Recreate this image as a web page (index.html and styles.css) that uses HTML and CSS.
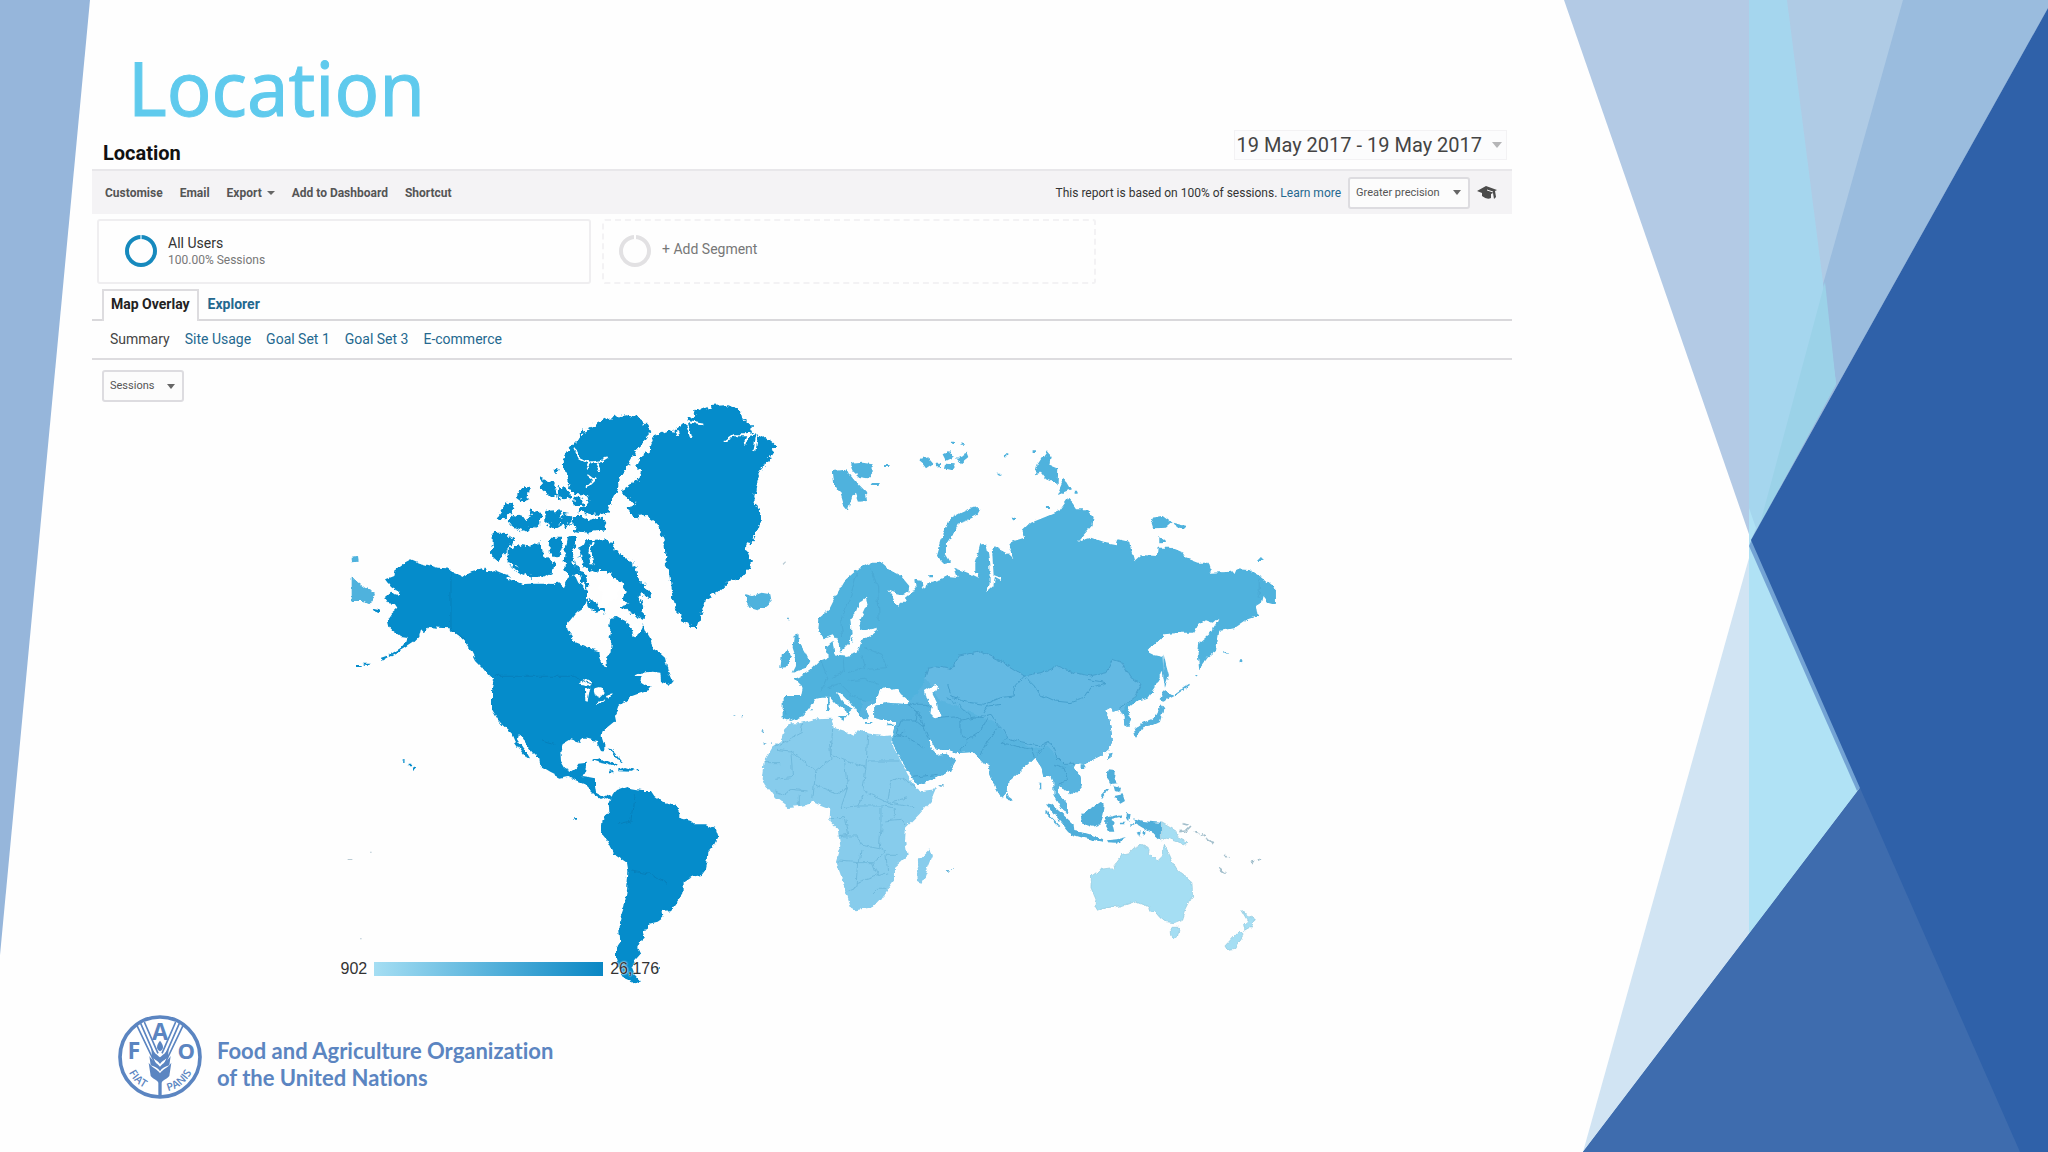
FILE: index.html
```html
<!DOCTYPE html>
<html lang="en">
<head>
<meta charset="utf-8">
<meta name="viewport" content="width=device-width, initial-scale=1">
<title>Location</title>
<link rel="stylesheet" href="styles.css">
</head>
<body>
<svg class="backdrop" viewBox="0 0 2048 1152" preserveAspectRatio="none" aria-hidden="true">
  <path fill="#96b6db" d="M0 0H90L0 955Z"/>
  <path fill="#b3cae5" d="M1564 0H2048V8L1751 540Z"/>
  <path fill="#afcbe5" d="M1787 0H2048V8L1836 384Z"/>
  <path fill="#9abcde" d="M1903 0H2048V8L1751 540Z"/>
  <path fill="#d1e4f3" d="M1749 558V934L1583 1152Z"/>
  <path fill="#a5d6ee" d="M1749 0H1787L1836 384L1751 540L1749 508Z"/>
  <path fill="#9bd2e8" d="M1825 282L1836 384L1760 524Z"/>
  <path fill="#b0e2f5" d="M1749 508L1756 528L1751 540L1860 788L1749 934Z"/>
  <path fill="#73a3d4" d="M1749 546L1752 539L1861 787L1857 791Z"/>
  <path fill="#2f61a9" d="M2048 8V1152H1583L1860 788L1751 540Z"/>
  <path fill="#3e6cae" d="M1860 788L2020 1152H1583Z"/>
</svg>

<main class="slide">
  <h1 class="slide-title">Location</h1>

  <section class="report">
    <header class="report-head">
      <h2>Location</h2>
      <button class="date-range" type="button">19 May 2017 - 19 May 2017 <span class="caret pale"></span></button>
    </header>

    <div class="toolbar">
      <div class="actions">
        <button type="button">Customise</button>
        <button type="button">Email</button>
        <button type="button">Export <span class="caret small"></span></button>
        <button type="button">Add to Dashboard</button>
        <button type="button">Shortcut</button>
      </div>
      <p class="sampling">This report is based on 100% of sessions. <a href="#learn">Learn more</a></p>
      <span class="picker precision">
        <select aria-label="Sampling precision"><option>Greater precision</option></select>
        <span class="caret"></span>
      </span>
      <svg class="cap" viewBox="0 0 20 16" aria-hidden="true">
        <path fill="#4b4b4b" d="M9 1L20 5L18 6L19 12L17 14L16 8L14 9V13Q10 15 5 11V8L0 6Z"/>
        <path fill="none" stroke="#f4f3f4" d="M10 5L16 7"/>
      </svg>
    </div>

    <div class="segments">
      <div class="segment">
        <svg class="ring" viewBox="0 0 32 32" aria-hidden="true"><circle cx="16" cy="16" r="14" fill="none" stroke="#1689bd" stroke-width="4"/><path stroke="#8fcbe6" stroke-width="2" d="M16 0V4"/></svg>
        <div><strong>All Users</strong><small>100.00% Sessions</small></div>
      </div>
      <button class="segment add" type="button">
        <svg class="ring" viewBox="0 0 32 32" aria-hidden="true"><circle cx="16" cy="16" r="14" fill="none" stroke="#e2e1e3" stroke-width="4"/><path stroke="#fff" stroke-width="2" d="M16 0V4"/></svg>
        <span>+ Add Segment</span>
      </button>
    </div>

    <nav class="tabs" aria-label="Report view">
      <a class="current" href="#map">Map Overlay</a>
      <a href="#explorer">Explorer</a>
    </nav>
    <nav class="subtabs" aria-label="Metric group">
      <a class="current" href="#summary">Summary</a>
      <a href="#usage">Site Usage</a>
      <a href="#goal1">Goal Set 1</a>
      <a href="#goal3">Goal Set 3</a>
      <a href="#ecommerce">E-commerce</a>
    </nav>

    <span class="picker metric">
      <select aria-label="Metric"><option>Sessions</option></select>
      <span class="caret"></span>
    </span>

    <div class="map" id="map">
      <svg viewBox="0 36 2880 1794" role="img" aria-label="World map of sessions by continent">
        <defs>
          <filter id="coast" x="-2%" y="-2%" width="104%" height="104%" color-interpolation-filters="sRGB">
            <feTurbulence type="fractalNoise" baseFrequency=".045" numOctaves="3" seed="4"/>
            <feDisplacementMap in="SourceGraphic" scale="16" xChannelSelector="R" yChannelSelector="G"/>
          </filter>
          <filter id="fjords" x="-2%" y="-2%" width="104%" height="104%" color-interpolation-filters="sRGB">
            <feTurbulence type="fractalNoise" baseFrequency=".06" numOctaves="3" seed="9"/>
            <feDisplacementMap in="SourceGraphic" scale="26" xChannelSelector="R" yChannelSelector="G"/>
          </filter>
          <path id="eurasia" d="M210 425L240 425 262 445 300 465 325 495 322 512 300 520 280 515 262 508 275 525 280 545 295 555 300 545 318 545 312 530 330 515 345 510 340 475 362 480 365 495 360 505 385 485 420 475 440 465 470 468 460 440 500 455 530 470 532 460 520 455 520 430 530 400 538 370 555 368 562 400 565 430 566 470 566 490 555 515 577 495 582 470 600 480 600 470 578 462 574 400 580 375 600 385 620 395 640 415 622 365 670 350 665 330 690 305 740 285 775 270 800 235 815 250 825 265 860 265 875 285 872 315 850 340 830 362 870 350 905 362 945 370 950 355 985 362 990 385 1000 420 1020 402 1068 405 1070 380 1110 380 1145 395 1155 412 1190 425 1220 425 1230 455 1290 452 1298 462 1305 445 1345 447 1385 470 1425 505 1425 552 1400 545 1385 525 1380 545 1365 555 1370 585 1340 595 1300 622 1255 630 1250 660 1245 690 1220 710 1195 745 1190 700 1195 665 1225 640 1250 600 1252 590 1235 605 1215 598 1190 615 1180 635 1140 635 1090 640 1065 665 1040 690 1060 700 1085 705 1087 745 1078 770 1060 800 1040 830 1010 840 985 862 980 875 992 900 985 918 970 910 968 885 958 866 935 872 932 858 910 870 922 885 925 900 930 925 935 955 922 985 900 1005 870 1020 845 1028 825 1025 818 1040 835 1065 842 1095 825 1115 810 1123 805 1110 785 1100 772 1090 768 1115 785 1135 798 1155 802 1180 785 1170 772 1145 758 1122 758 1085 750 1065 728 1068 722 1040 705 1015 700 1010 685 1025 650 1055 622 1080 620 1110 602 1132 585 1105 568 1060 562 1025 550 1030 532 1010 515 993 460 997 442 990 425 990 405 985 388 955 380 957 390 982 410 1002 435 998 465 1018 450 1045 410 1070 350 1092 335 1070 310 1035 290 1000 275 972 275 940 285 900 260 900 220 890 220 855 260 845 320 850 325 838 300 820 290 805 270 810 255 798 240 805 225 845 205 855 192 865 205 890 185 895 165 870 150 845 120 815 108 810 120 840 155 862 144 870 140 888 132 866 110 855 88 830 60 830 40 835 25 860 5 885 -30 900 -55 890 -55 825 0 825 5 800 -20 775 0 765 25 750 55 720 80 710 78 675 95 660 100 700 140 705 170 695 182 660 230 628 230 620 180 630 172 610 200 550 195 530 175 545 165 575 148 595 152 635 145 665 120 690 110 660 95 640 65 652 52 630 55 590 85 565 110 515 130 480 170 445Z"/>
          <clipPath id="eurasia-clip"><use href="#eurasia"/></clipPath>
        </defs>

        <g fill="#058ccb" filter="url(#fjords)">
          <!-- Greenland -->
          <path d="M985 118L1005 120 1035 95 1060 65 1110 45 1160 42 1195 55 1200 75 1230 100 1228 120 1255 135 1290 150 1308 165 1285 200 1262 235 1250 270 1240 320 1258 370 1255 405 1235 450 1215 465 1230 500 1228 530 1200 560 1160 575 1130 605 1092 625 1085 665 1068 712 1050 705 1025 690 1005 650 990 600 985 550 975 520 970 450 950 400 915 375 880 380 860 350 885 335 845 310 850 290 895 262 900 240 885 225 900 195 925 175 940 135Z"/>
          <!-- Ellesmere, Axel Heiberg, Devon -->
          <path d="M700 155L720 130 740 115 775 95 800 82 850 73 895 82 918 100 930 120 910 150 885 180 865 215 840 255 830 290 808 335 800 365 770 372 720 365 710 355 735 345 745 330 740 312 700 308 680 280 668 230 665 210 685 175Z"/>
          <path d="M695 375L720 375 745 390 785 380 795 400 788 418 740 425 700 420Z"/>
          <!-- Arctic archipelago -->
          <path d="M455 425L490 425 520 445 512 465 490 490 470 510 445 490 455 455ZM500 480L530 460 570 467 598 447 606 490 640 520 635 550 600 560 575 560 540 545 510 530 535 525 500 515ZM500 335L522 340 515 360 490 385 467 382ZM538 290L567 287 562 325 545 335 525 320ZM598 262L640 280 650 320 630 318 600 290ZM650 285L675 290 690 315 670 325 652 315ZM510 368L560 385 575 352 598 365 598 400 550 422 505 405ZM610 360L652 357 668 395 640 412 610 392ZM662 365L690 370 692 395 670 415 665 390ZM625 440L660 440 662 480 645 505 622 480ZM680 440L712 435 705 465 690 485 698 515 712 545 690 560 670 540 672 500 675 465ZM695 320L720 320 730 345 700 345ZM638 230L650 232 648 245 640 245ZM740 625L760 635 790 660 765 665 745 650Z"/>
          <!-- Baffin -->
          <path d="M735 448L790 445 815 450 825 480 855 500 880 520 890 560 912 580 925 600 928 625 905 612 890 615 910 650 905 685 880 672 850 655 840 645 862 640 845 620 855 595 835 570 815 560 795 540 765 540 735 530 718 500 718 470ZM700 520L715 530 740 560 742 590 725 580Z"/>
        </g>

        <g filter="url(#coast)">
          <g fill="#058ccb">
            <path d="M210 505L235 515 262 522 290 530 318 532 340 545 365 556 385 545 405 540 420 530 428 540 432 525 440 545 460 537 480 545 500 552 520 568 545 580 575 575 600 570 630 578 650 575 668 590 680 565 700 550 712 575 722 585 738 600 738 625 728 650 705 665 690 685 678 700 680 720 692 735 695 750 715 758 745 772 772 780 775 800 785 822 798 826 795 800 808 785 812 760 803 740 808 720 805 700 808 680 830 678 850 690 865 700 875 735 885 740 898 715 905 700 915 725 930 750 935 772 955 785 972 800 980 835 995 870 985 882 960 870 958 845 935 842 900 845 880 855 905 855 900 875 915 885 935 885 925 897 900 905 865 918 860 925 835 945 830 960 822 975 825 990 800 1010 785 1020 782 1035 790 1060 790 1082 780 1080 770 1060 768 1050 755 1048 740 1043 720 1043 715 1053 690 1045 665 1060 658 1080 660 1110 672 1130 690 1140 705 1130 712 1118 738 1115 732 1140 725 1155 745 1158 765 1162 765 1185 768 1205 785 1215 800 1208 812 1216 808 1228 795 1218 780 1224 765 1215 745 1195 730 1180 705 1170 680 1155 655 1160 625 1145 600 1130 595 1105 575 1085 555 1060 540 1035 530 1030 528 1045 545 1070 560 1090 567 1102 555 1100 535 1072 520 1050 510 1025 485 1003 470 985 453 955 453 900 460 870 440 850 425 830 405 810 390 780 370 750 355 735 325 712 290 710 265 708 250 725 240 715 235 735 215 755 185 775 150 795 145 792 180 770 195 752 200 738 180 735 160 720 145 705 140 685 150 670 172 650 165 640 140 637 130 622 150 605 170 612 172 600 150 585 135 565 160 555 165 535 190 515Z"/>
            <!-- South America -->
            <path d="M808 1225L825 1200 860 1188 870 1195 900 1200 930 1200 940 1215 965 1232 1000 1240 1015 1265 1015 1280 1050 1290 1060 1300 1095 1300 1125 1315 1132 1335 1120 1360 1102 1380 1100 1410 1095 1435 1080 1455 1050 1460 1028 1475 1028 1500 1010 1530 990 1558 965 1560 967 1580 950 1592 925 1598 920 1618 905 1620 912 1640 895 1655 888 1670 898 1690 880 1710 872 1730 880 1750 900 1772 880 1778 850 1765 840 1750 825 1700 825 1670 838 1650 835 1620 838 1580 850 1545 858 1500 862 1440 858 1415 820 1390 800 1350 780 1325 785 1285 805 1262 803 1235Z"/>
            <!-- Caribbean, Hawaii, Aleutians -->
            <path d="M752 1108L775 1102 800 1110 830 1123 825 1128 800 1120 765 1112ZM835 1135L852 1128 878 1136 870 1142 835 1141ZM803 1138H818V1144H803ZM887 1136H897V1141H887ZM212 1125L224 1130 218 1137ZM185 1108h6v4h-6ZM203 1115h8v5h-8ZM700 1278h8v8h-8ZM800 1072l12 2 30 40-4 3-22-30ZM120 800l18-6 2 5-18 10ZM45 822h14v6H45ZM68 818h18v6H68ZM92 653l28 6-4 8-20-6ZM945 1728h12v6h-12Z"/>
          </g>
          <!-- Great Lakes and inlets -->
          <path fill="#fff" d="M710 878L732 862 750 872 748 886 730 880ZM732 895L748 890 740 932 733 930ZM760 892L775 888 788 905 775 918 765 910ZM768 935L790 925 788 933 770 940ZM795 915L815 910 812 917 797 920ZM770 585L800 550 820 570 838 590 830 625 805 630 800 650 780 640 785 610ZM865 705L890 695 895 715 885 735Z"/>
          <path fill="none" stroke="#fff" stroke-width="6" d="M700 170L715 200 745 215 780 210 800 198M748 215L740 235M765 215L778 240M735 290L760 265 740 250M770 545L795 560M755 450L745 480 755 520M1150 150L1175 133 1220 133 1240 128M1220 133L1210 160M1250 125L1240 180M1035 90L1050 140M1040 90L1090 98M1010 118L1015 135M500 560L545 575 640 575"/>
          <path fill="none" stroke="#0780bb" stroke-width="3" d="M330 540V712L370 745M462 856H700L760 885M600 1050L640 1060M880 1210L870 1290 830 1300M870 1440L930 1450 980 1480"/>
          <path fill="#4fb2dd" d="M32 557L75 590 105 605 100 622 88 640 65 630 32 630ZM35 500L48 498 50 512 36 514ZM1215 610L1235 615 1262 605 1288 610 1292 632 1270 650 1250 658 1225 650 1215 632Z"/>
        </g>

        <g transform="translate(1380 90)" filter="url(#coast)">
          <use href="#eurasia" fill="#4fb2dd"/>
          <g clip-path="url(#eurasia-clip)">
            <path fill="#58b4df" d="M320 838L350 820 372 770 600 800 1000 900V1250H180V838Z"/>
            <path fill="#63b9e3" d="M420 840L372 770 380 745 410 738 450 745 475 705 540 692 600 720 640 745 670 765 720 755 765 735 820 755 870 765 915 755 935 715 965 725 990 770 1020 790 1000 830 960 870 960 1060 840 1040 790 1030 770 1010 740 975 700 985 660 965 620 950 590 910 540 885Z"/>
            <g fill="none" stroke="#45a0cd" stroke-width="3" stroke-linejoin="round">
              <path d="M372 770L380 745 410 738 450 745 475 705 540 692 600 720 640 745 670 765 720 755 765 735 820 755 870 765 915 755 935 715 965 725 990 770 1020 790 1000 830 955 865"/>
              <path d="M670 765L700 795 715 820 760 840 810 845 850 832 870 800 915 785 860 775M670 765L640 800 640 825 600 830 550 850 510 845 450 825 440 790M440 830L470 850 510 890 540 885 560 855 600 850M410 890L460 885 480 900 530 890 570 880 590 910 610 930 620 950 660 965 720 975 740 965 760 980 770 1010 790 1030 830 1030M480 900L480 940 500 955 540 930 560 890M500 955L480 990M540 1000L560 960 590 920M620 950L600 965 690 985 700 1010M740 965L710 1000M760 1030L790 1040 800 1080 770 1090M320 850L350 870 345 900 300 900 285 940 320 950 370 980M350 870L370 920 385 960M345 900L370 920M410 1060L330 1070M320 850L370 850 400 860M280 950L310 930"/>
              <path stroke-opacity=".5" d="M210 440L230 500 235 600M170 450L150 520 120 600 125 650M60 720L80 770 60 810M125 705L130 750 90 770M180 700L190 740 140 755M190 680L240 700 260 740 200 745M140 780L190 775 230 790M80 800L120 790 160 830 200 840M-55 860L-40 880M1375 470V530"/>
            </g>
          </g>
          <path fill="#fff" d="M372 810L400 792 412 798 405 812 395 820 408 845 412 870 422 885 400 892 388 880 392 855 378 835Z"/>
          <g fill="#4fb2dd">
            <!-- Svalbard, Franz Josef Land, Novaya Zemlya, Severnaya Zemlya -->
            <path d="M95 150L120 148 140 145 150 165 170 190 195 215 198 240 175 242 165 215 155 225 140 268 125 250 115 215 100 195ZM150 128L185 125 215 130 215 155 200 172 175 168 155 150ZM252 132h14v6h-14ZM212 192h24v-6h-20ZM352 118L385 108 400 125 375 142 365 128ZM425 100L445 90 455 110 435 120ZM465 110L500 95 505 108 480 130ZM435 128L462 130 452 145 432 140ZM405 128h12v14h-12ZM450 62h12v6h-12ZM482 66h12v5h-12Z"/>
            <path d="M530 258L538 268 530 282 495 300 470 308 455 340 435 370 435 400 450 425 430 430 405 405 418 360 435 325 445 295 480 275 510 262ZM738 88L752 105 748 135 772 145 770 190 735 175 720 155 702 160 710 130ZM790 170L810 205 768 222ZM698 88h10v8h-10ZM612 100h10v6h-10ZM818 212h12v6h-12ZM590 158h8v6h-8ZM1050 290L1085 285 1112 305 1095 320 1060 322ZM1115 305L1155 315 1145 325 1125 322ZM1075 345L1098 365 1075 367ZM1368 420L1380 408 1392 420ZM382 462h12v10h-12ZM632 290h10v8h-10ZM735 255h12v6h-12Z"/>
            <!-- British Isles, Mediterranean islands -->
            <path d="M-22 645L-8 640 -5 665 10 690 25 720 15 740 -25 755 -15 735 -15 710 -25 680ZM-60 700L-38 688 -30 705 -40 735 -65 738ZM78 830L86 828 86 868 78 866ZM110 885L135 885 130 898ZM192 903h22v5h-22ZM258 908h20v5h-18ZM30 862h8v6h-8ZM150 655l8-4-2 16Z"/>
            <!-- Sakhalin, Japan, Kurils -->
            <path fill="#55b2dd" d="M1088 700L1096 735 1104 765 1092 800 1086 760ZM1088 808L1118 825 1098 835 1088 842 1076 835ZM1078 850L1090 865 1080 900 1055 912 1025 918 1005 948 998 925 1025 905 1050 895 1070 880ZM1120 818L1165 788 1167 792 1122 824ZM1180 762h6v5h-6ZM1268 690l16 8-2 4-16-8ZM1316 718h8v6h-8ZM922 995L935 992 932 1010 922 1015ZM836 1030h14v14h-14ZM615 1118L632 1130 628 1142 618 1140ZM716 1085h5v18h-5Z"/>
          </g>
        </g>

        <!-- Africa -->
        <g transform="translate(1200 510)" filter="url(#coast)">
          <path fill="#87ccec" d="M150 487L175 487 230 472 272 470 278 500 310 510 340 525 350 508 390 518 430 522 450 520 458 560 480 600 500 640 525 680 540 690 585 685 570 720 535 760 495 800 492 840 500 885 462 918 462 955 440 985 420 1015 398 1038 345 1048 330 1040 310 980 298 935 285 900 298 855 290 805 265 780 268 745 250 738 220 725 180 735 140 738 105 712 85 685 62 655 68 605 95 558 120 540 130 505ZM568 862L576 885 560 925 545 965 528 960 525 930 535 895Z"/>
          <g fill="none" stroke="#6fb9dc" stroke-width="3" stroke-linejoin="round">
            <path d="M185 487L180 515 105 555M105 565L150 570 155 650 100 655M150 570L225 630 270 595 265 540M275 505L270 580 310 595 375 620 380 525M310 595L320 680 295 700 220 670 215 720M383 600L475 600M375 620L365 690 440 725 500 710M440 725L520 740M320 680L300 740 350 735 370 700M265 770L310 770 320 820 290 825M350 735L420 735 420 800 415 860 360 850 350 825 300 825M290 900L355 905 360 870M355 905L395 905 435 870 415 860M350 905L345 980 320 990M345 965L410 945 395 905M410 945L440 935 435 880 470 880M430 780L480 775 495 795M420 735L460 740 460 770M440 725L450 660 480 650 525 680M100 690L130 700 150 685 200 690M175 700V735M68 605L120 605M225 630L220 670M440 985L410 985 395 1000"/>
          </g>
          <path fill="#6fb9dc" d="M596 672h12v5h-12ZM62 508h5v5h-5ZM68 546h5v5h-5ZM88 544h4v5h-4ZM-22 460h5v5h-5ZM0 462h5v4h-5ZM615 930h8v3h-8ZM628 924h7v3h-7ZM138 170h6v5h-6Z"/>
        </g>

        <!-- South-east Asia and Oceania -->
        <g transform="translate(2040 750)" filter="url(#coast)">
          <g fill="#4faeda">
            <path d="M75 487L92 490 125 520 158 550 160 570 190 575 225 585 250 595 245 602 190 592 150 580 125 550 105 525ZM178 518L205 505 240 480 252 492 248 515 240 550 215 558 185 548ZM255 530L298 520 296 528 268 535 285 545 275 550 280 572 265 572 252 550ZM262 388L282 390 278 415 290 430 270 432 260 410ZM278 435L300 440 298 455 282 450ZM280 465L305 460 312 480 298 488ZM240 465L262 440 264 444 244 470ZM340 532L365 540 385 542 420 545 420 597 400 580 365 560 345 548ZM258 598L288 595 315 588 290 605 262 604ZM318 512l8 6-4 26-6-8ZM300 545h14v5h-14ZM325 550h18v4h-18ZM350 575l10-4-6 14ZM365 570h8v8h-8ZM75 510l40 42-3 3-40-42Z"/>
          </g>
          <g fill="#a5def3" stroke="#8fc7dc" stroke-width="2">
            <path d="M422 545L465 570 470 590 495 602 490 610 460 600 440 592 422 597Z"/>
            <path d="M340 620L360 612 388 625 385 640 410 660 425 645 430 610 445 640 458 670 470 690 490 705 513 725 515 765 495 805 485 835 460 845 435 842 420 830 405 812 390 815 385 795 365 788 345 780 300 795 260 800 230 808 222 795 225 775 210 740 212 705 240 685 275 680 305 640 325 635ZM450 862L475 862 470 885 460 893 452 880ZM660 805L680 825 703 835 690 860 672 870 668 850 680 840ZM655 868L668 880 640 925 620 928 612 915Z"/>
          </g>
          <g fill="none" stroke="#a3bfcc" stroke-width="5">
            <path d="M475 572L495 570 510 555M485 548L500 552M522 572l10 6M540 578l12 8M555 592l12 6 8 12M612 640l10 12M592 682l22 16M692 665l10-4M708 658l10-6"/>
          </g>
        </g>
        <path fill="#b9cbd4" d="M20 1404h14v3H20ZM87 1382h5v3h-5ZM57 1642h5v3h-5ZM1325 518l8-7 2 3-8 8Z"/>
      </svg>
      <div class="legend"><span>902</span><i class="ramp"></i><span>26,176</span></div>
    </div>
  </section>

  <footer class="brand">
    <svg class="emblem" viewBox="0 0 252 258" role="img" aria-label="FAO, Fiat Panis">
      <circle cx="126" cy="129" r="120" fill="#fff" stroke="#5b85c1" stroke-width="11"/>
      <g fill="none" stroke="#5b85c1" stroke-width="5">
        <path d="M57 35L112 150M68 28L116 138M79 24L120 118M195 35L140 150M184 28L136 138M173 24L132 118"/>
      </g>
      <g fill="#5b85c1">
        <path d="M126 80C138 95 138 106 126 112C114 106 114 95 126 80Z"/>
        <path d="M100 102C108 118 118 122 126 130C134 122 144 118 152 102L150 132C140 136 132 142 126 150C120 142 112 136 102 132Z"/>
        <path d="M94 126C104 142 116 146 126 158C136 146 148 142 158 126L154 154C142 158 132 162 126 172C120 162 110 158 98 154Z"/>
        <path d="M92 146C104 164 118 164 126 178C134 164 148 164 160 146L154 186C144 198 136 196 131 206V246H121V206C116 196 108 198 98 186Z"/>
        <text x="126" y="79" font-size="70">A</text>
        <text x="48" y="136" font-size="70">F</text>
        <text x="205" y="136" font-size="66">O</text>
      </g>
      <path id="motto-left" fill="none" d="M31 172A104 104 0 0 0 112 232"/>
      <path id="motto-right" fill="none" d="M146 232A104 104 0 0 0 230 148"/>
      <g class="motto" fill="#5b85c1" font-size="32">
        <text><textPath href="#motto-left" startOffset="4">FIAT</textPath></text>
        <text><textPath href="#motto-right" startOffset="4">PANIS</textPath></text>
      </g>
    </svg>
    <p>Food and Agriculture Organization<br>of the United Nations</p>
  </footer>
</main>
</body>
</html>
```
FILE: styles.css
```css
* { box-sizing: border-box; }

body {
  margin: 0;
  min-height: 100vh;
  background: #fefefe;
  color: #333;
  font: 14px/20px Roboto, "Liberation Sans", sans-serif;
}

h1, h2, p { margin: 0; }
a { color: #24688f; text-decoration: none; }
button, select { font: inherit; color: inherit; border: 0; background: none; padding: 0; }

.backdrop {
  position: absolute;
  inset: 0;
  z-index: -1;
  width: 100%;
  height: 100%;
}

.slide { padding: 48px 0 0 92px; }

.slide-title {
  padding-left: 36px;
  color: #5fcaed;
  font: 400 74px/80px "Noto Sans", "Open Sans", sans-serif;
  -webkit-text-stroke: 1px #5fcaed;
}

.report { width: 72.6%; }

.report-head {
  display: flex;
  justify-content: space-between;
  align-items: center;
  height: 41px;
  padding: 0 5px 0 11px;
}
.report-head h2 { padding-top: 8px; color: #111; font-size: 20px; font-weight: 700; }

.date-range {
  display: flex;
  align-items: center;
  gap: 10px;
  height: 30px;
  margin-bottom: 8px;
  padding: 0 4px 0 2px;
  border: 1px solid #f3f2f4;
  background: #fcfcfd;
  color: #444;
  font-size: 20px;
}

.caret {
  display: inline-block;
  border: 4px solid transparent;
  border-top: 5px solid #666;
  border-bottom: 0;
  vertical-align: middle;
}
.caret.pale { border-width: 6px 5px 0; border-top-color: #b5b5b7; }
.caret.small { margin-left: 2px; border-width: 4px 4px 0; }

.toolbar {
  display: flex;
  align-items: center;
  height: 45px;
  padding: 0 15px 0 13px;
  border-top: 2px solid #e8e7ea;
  background: #f4f3f5;
  font-size: 12px;
}
.actions { display: flex; gap: 17px; margin-right: auto; font-weight: 700; color: #555; }
.sampling { margin-right: 7px; }

.picker {
  position: relative;
  display: inline-flex;
  align-items: center;
  height: 32px;
  border: 2px solid #dddce0;
  border-radius: 3px;
  background: #fcfcfc;
  color: #555;
  font-size: 11px;
}
.picker select { width: 100%; height: 100%; padding-left: 6px; appearance: none; }
.picker .caret { position: absolute; right: 7px; pointer-events: none; }
.precision { width: 122px; }
.metric { width: 82px; margin: 10px 0 0 10px; }
.cap { width: 20px; height: 16px; margin-left: 7px; }

.segments { display: flex; gap: 11px; padding: 5px 0 0 5px; }
.segment {
  display: flex;
  align-items: center;
  gap: 11px;
  width: 494px;
  height: 65px;
  padding: 0 0 2px 26px;
  border: 2px solid #efeef0;
  border-radius: 3px;
  background: #fefefe;
  text-align: left;
}
.segment.add { border: 2px dashed #f3f2f4; padding-left: 15px; color: #777; }
.segment.add span { padding-bottom: 4px; }
.segment strong, .segment small { display: block; font-weight: 400; line-height: 18px; }
.segment small { font-size: 12px; color: #777; line-height: 16px; }
.ring { width: 32px; height: 32px; }

.tabs {
  display: flex;
  height: 37px;
  padding: 5px 0 0 10px;
  border-bottom: 2px solid #d9d8db;
  font-weight: 700;
  font-size: 14px;
  line-height: 26px;
}
.tabs a { padding: 0 7px; height: 32px; border: 2px solid transparent; border-bottom: 0; }
.tabs .current { border-color: #dddcdf; background: #fefefe; color: #222; }

.subtabs {
  display: flex;
  gap: 15px;
  height: 39px;
  padding-left: 18px;
  border-bottom: 2px solid #dddcdf;
  line-height: 36px;
}
.subtabs .current { color: #444; }

.map { position: relative; width: 67.6%; margin: 1px 0 0 17.5%; }
.map svg { display: block; width: 100%; }

.legend {
  position: absolute;
  left: 0;
  bottom: 22px;
  display: flex;
  align-items: center;
  gap: 7px;
  font: 16px/20px "Liberation Sans", Arial, sans-serif;
  text-shadow: 0 0 2px #fff, 0 0 2px #fff;
}
.ramp { width: 229px; height: 14px; background: linear-gradient(90deg, #a5def3, #0a87c4); }

.brand { display: flex; align-items: center; gap: 15px; padding: 13px 0 0 26px; }
.emblem { width: 84px; height: 86px; }
.emblem text { font-family: "Open Sans", sans-serif; font-weight: 700; text-anchor: middle; }
.emblem .motto text { font-weight: 600; text-anchor: start; }
.brand p {
  padding-top: 14px;
  color: #5b85c1;
  font: 700 22px/27px Lato, "Noto Sans", sans-serif;
  font-variant-ligatures: none;
}
```
